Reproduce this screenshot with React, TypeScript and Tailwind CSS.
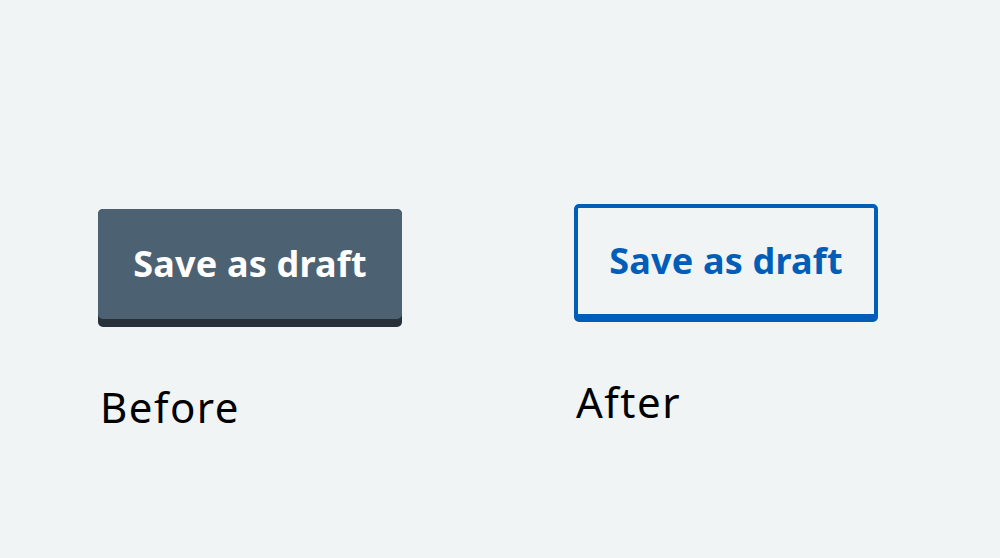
import React from "react";

export default function App() {
  const font = { fontFamily: '"Noto Sans", "Open Sans", sans-serif' };
  return (
    <div className="w-[1000px] h-[558px] bg-[#f0f4f5] overflow-hidden" style={font}>
      <div className="flex pt-[204px] pl-[98px]">
        <div className="flex flex-col w-[304px] pt-[5px]">
          <div className="w-[304px] h-[118px] rounded-[5px] bg-[#263139] pb-[8px]">
            <div className="h-[110px] rounded-[5px] bg-[#4c6272] flex items-center justify-center">
              <span className="text-white font-bold text-[36px] leading-none tracking-[0.2px]">Save as draft</span>
            </div>
          </div>
          <div className="mt-[59px] text-black text-[42px] leading-none tracking-[1.5px] pl-[2px]">Before</div>
        </div>
        <div className="flex flex-col w-[304px] ml-[172px]">
          <div className="w-[304px] h-[118px] rounded-[5px] border-[4px] border-b-[8px] border-[#005eb8] flex items-center justify-center">
            <span className="text-[#005eb8] font-bold text-[36px] leading-none tracking-[0.2px]">Save as draft</span>
          </div>
          <div className="mt-[59px] text-black text-[42px] leading-none tracking-[1.5px] pl-[2px]">After</div>
        </div>
      </div>
    </div>
  );
}
